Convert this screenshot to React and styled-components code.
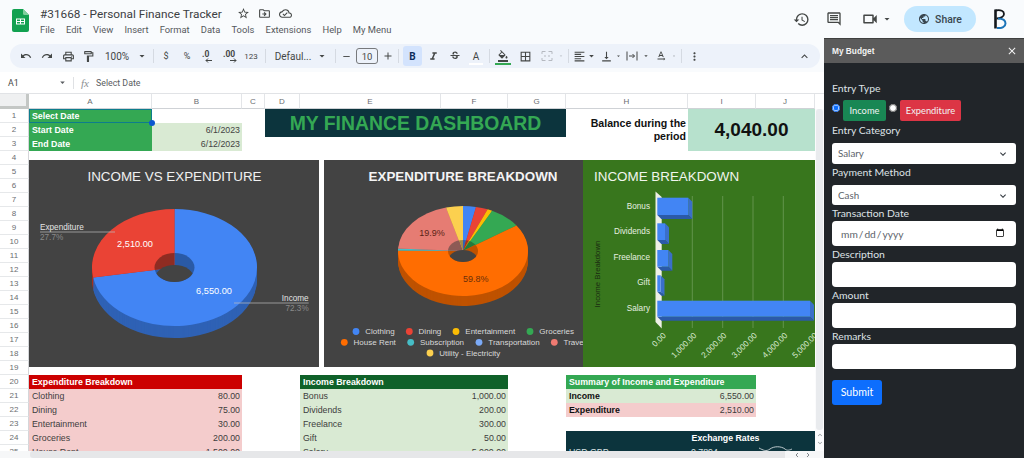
import React from "react";
import styled, { createGlobalStyle } from "styled-components";
import {
  MdStarBorder, MdOutlineDriveFileMove, MdOutlineCloudDone, MdHistory, MdOutlineInsertComment,
  MdOutlineVideocam, MdArrowDropDown, MdPublic, MdUndo, MdRedo, MdOutlineLocalPrintshop,
  MdOutlineFormatPaint, MdFormatItalic, MdStrikethroughS, MdOutlineFormatColorFill, MdBorderAll,
  MdFormatAlignLeft, MdVerticalAlignBottom, MdTextRotationNone, MdMoreVert, MdKeyboardArrowUp,
  MdClose, MdKeyboardArrowDown, MdAdd, MdRemove,
} from "react-icons/md";

const GlobalStyle = createGlobalStyle`
  *, *::before, *::after {
    box-sizing: border-box;
    padding: 0;
    margin: 0;
  }
  body {
    font-family: "Liberation Sans", Arial, sans-serif;
    background: #f9fbfd;
  }
`;

const UI_FONT = `Roboto, "Liberation Sans", sans-serif`;
const FORM_FONT = `Lato, "Open Sans", sans-serif`;

const Page = styled.div`
  width: 1024px;
  height: 458px;
  overflow: hidden;
  background: #f9fbfd;
`;

/* top bar */
const TopBar = styled.header`
  height: 38px;
  display: flex;
  align-items: flex-start;
  padding: 9px 0 0 12px;
`;

const DocInfo = styled.div`
  margin-left: 11px;
  margin-top: -3px;
`;

const TitleRow = styled.div`
  display: flex;
  align-items: center;
  height: 15px;
  color: #444746;
`;

const DocTitle = styled.h1`
  font: 400 11.8px ${UI_FONT};
  color: #3c4043;
  width: 193px;
  white-space: nowrap;
`;

const TitleIcon = styled.span`
  display: flex;
  width: 21px;
  justify-content: center;
`;

const MenuRow = styled.nav`
  display: flex;
  gap: 11.2px;
  margin-top: 3px;
  font: 400 9.4px ${UI_FONT};
  color: #55585c;
`;

const TopActions = styled.div`
  margin-left: auto;
  margin-top: -3px;
  display: flex;
  align-items: center;
  color: #444746;
`;

const ActionSlot = styled.span`
  display: flex;
  justify-content: center;
  align-items: center;
  width: ${(p) => p.$w}px;
  margin-left: ${(p) => p.$ml || 0}px;
`;

const SharePill = styled.div`
  width: 72px;
  height: 26px;
  border-radius: 13px;
  background: #c2e7ff;
  display: flex;
  align-items: center;
  justify-content: center;
  gap: 5px;
  margin-left: 10px;
  font: 500 10.4px ${UI_FONT};
  color: #39464f;
`;

const BrandMark = styled.svg`
  margin-left: 17px;
  margin-right: 17px;
`;

/* main */
const Body = styled.div`
  display: flex;
  height: 420px;
`;

const Main = styled.main`
  width: 824px;
  display: flex;
  flex-direction: column;
`;

const Toolbar = styled.div`
  height: 24px;
  margin: 6px 4px 4px 10px;
  padding: 0 8px 0 6px;
  border-radius: 12px;
  background: #edf2fa;
  display: flex;
  align-items: center;
  color: #444746;
  font: 400 10px ${UI_FONT};
`;

const ToolSlot = styled.span`
  flex: none;
  width: ${(p) => p.$w}px;
  height: 20px;
  display: flex;
  align-items: center;
  justify-content: center;
  white-space: nowrap;
  position: relative;
  color: ${(p) => p.$color || "inherit"};
  font-size: ${(p) => p.$size || 10}px;
  background: ${(p) => (p.$active ? "#d3e3fd" : "transparent")};
  border-radius: ${(p) => (p.$active ? 3 : 0)}px;
  font-weight: ${(p) => (p.$active ? 700 : 400)};
`;

const ToolSep = styled.span`
  flex: none;
  width: ${(p) => p.$w}px;
  display: flex;
  justify-content: center;
  &::after {
    content: "";
    width: 1px;
    height: 14px;
    background: #d5dae2;
  }
`;

const SizeBox = styled.span`
  width: 22px;
  height: 16px;
  border: 1px solid #77797c;
  border-radius: 3px;
  display: flex;
  align-items: center;
  justify-content: center;
  font-size: 9.5px;
`;

const ToolEnd = styled.span`
  margin-left: auto;
  display: flex;
`;

const FillBar = styled.span`
  position: absolute;
  left: 3px;
  right: 3px;
  bottom: 1px;
  height: 2px;
  background: ${(p) => p.$color};
`;

const FormulaBar = styled.div`
  height: 21px;
  padding-left: 8px;
  display: flex;
  align-items: center;
  background: #fff;
  font: 400 8.8px ${UI_FONT};
  color: #5a5d61;
`;

const CellName = styled.span`
  width: 49px;
  color: #444746;
`;

const FormulaSep = styled.span`
  width: 1px;
  height: 12px;
  background: #dfe1e4;
  margin: 0 7px 0 5px;
`;

const FxLabel = styled.i`
  width: 15px;
  font: italic 400 11px "Liberation Serif", serif;
  color: #8c8f93;
`;

/* sheet */
const Sheet = styled.section`
  position: relative;
  height: 365px;
  overflow: hidden;
  background: #fff;
  border-top: 1px solid #e1e3e6;
`;

const ColumnHeads = styled.div`
  display: grid;
  grid-template-columns: 29px 123px 90px 23px 35px 141px 67px 58px 122px 68px 59px;
  height: 15px;
`;

const CornerCell = styled.div`
  background: #eff0f1;
  border-right: 3px solid #c4c7c5;
  border-bottom: 3px solid #c4c7c5;
`;

const ColumnHead = styled.div`
  border-right: 1px solid #e3e5e8;
  border-bottom: 1px solid #cfd2d6;
  font-size: 8px;
  color: #6a6d70;
  display: flex;
  align-items: center;
  justify-content: center;
`;

const SheetBody = styled.div`
  display: flex;
`;

const RowHeads = styled.div`
  width: 29px;
  flex: none;
  background: #fff;
`;

const RowHead = styled.div`
  height: 14px;
  border-bottom: 1px solid #e6e8ea;
  border-right: 1px solid #d4d6d9;
  font-size: 8px;
  color: #6a6d70;
  display: flex;
  align-items: center;
  justify-content: center;
`;

const Cells = styled.div`
  width: 786px;
  flex: none;
`;

const HeadBlock = styled.div`
  display: grid;
  grid-template-columns: 123px 90px 23px 301px 122px 127px;
  grid-template-rows: repeat(3, 14px);
  font-size: 8.8px;
`;

const GreenLabel = styled.div`
  grid-column: 1;
  grid-row: ${(p) => p.$row};
  background: #34a853;
  color: #fff;
  font-weight: 700;
  padding-left: 3px;
  line-height: 14px;
  position: relative;
  box-shadow: ${(p) => (p.$selected ? "inset 0 0 0 1px #0d7d8c" : "none")};
`;

const FillHandle = styled.span`
  position: absolute;
  right: -3px;
  bottom: -3px;
  width: 6px;
  height: 6px;
  border-radius: 50%;
  background: #0b57d0;
  z-index: 2;
`;

const DateCell = styled.div`
  grid-column: 2;
  grid-row: ${(p) => p.$row};
  background: #d9ead3;
  color: #444;
  text-align: right;
  padding-right: 2px;
  line-height: 14px;
`;

const Banner = styled.div`
  grid-column: 4;
  grid-row: 1 / span 2;
  background: #0c343d;
  color: #34a853;
  font-weight: 700;
  font-size: 19.4px;
  display: flex;
  align-items: center;
  justify-content: center;
`;

const BalanceLabel = styled.div`
  grid-column: 5;
  grid-row: 1 / span 3;
  font-size: 10.6px;
  font-weight: 700;
  line-height: 13px;
  color: #111;
  text-align: right;
  padding: 8px 2px 0 0;
`;

const BalanceValue = styled.div`
  grid-column: 6;
  grid-row: 1 / span 3;
  background: #b7e1cd;
  color: #111;
  font-size: 19px;
  font-weight: 700;
  display: flex;
  align-items: center;
  justify-content: center;
`;

const ChartRow = styled.div`
  display: flex;
  margin-top: 9px;
`;

const ChartPanel = styled.svg`
  display: block;
  flex: none;
  margin-right: ${(p) => p.$gap || 0}px;
  background: ${(p) => p.$bg};
  font-family: "Liberation Sans", Arial, sans-serif;
`;

const TableRow = styled.div`
  display: grid;
  grid-template-columns: 213px 208px 249px;
  column-gap: 58px;
  margin-top: 8px;
  font-size: 8.8px;
  color: #3d3d3d;
`;

const TableHead = styled.div`
  height: 14px;
  line-height: 14px;
  padding-left: 3px;
  color: #fff;
  font-weight: 700;
  background: ${(p) => p.$bg};
`;

const TableLine = styled.div`
  height: 14px;
  line-height: 14px;
  padding: 0 2px 0 3px;
  display: flex;
  justify-content: space-between;
  background: ${(p) => p.$bg};
`;

const LineLabel = styled.span`
  font-weight: ${(p) => (p.$bold ? 700 : 400)};
  color: ${(p) => (p.$bold ? "#111" : "inherit")};
`;

const SummaryBox = styled.div`
  width: 190px;
`;

const Exchange = styled.div`
  margin-top: 14px;
  background: #0c343d;
  color: #fff;
`;

const ExchangeHead = styled.div`
  height: 14px;
  line-height: 14px;
  padding-left: 70px;
  text-align: center;
  font-weight: 700;
`;

const ExchangeLine = styled.div`
  height: 14px;
  display: grid;
  grid-template-columns: 122px 68px 59px;
  padding-left: 3px;
  line-height: 14px;
  color: #d9e2e4;
`;

const ScrollTrackX = styled.div`
  position: absolute;
  left: 0;
  right: 0;
  bottom: 0;
  height: 7px;
  background: #f6f7f8;
  display: flex;
  z-index: 3;
`;

const ScrollThumbX = styled.div`
  margin-left: 30px;
  width: 755px;
  background: #e6e7e9;
  border-radius: 3px 0 0 3px;
`;

const ScrollArrows = styled.div`
  margin-left: 9px;
  display: flex;
  gap: 5px;
  align-items: center;
  color: #80868b;
`;

const ScrollTrackY = styled.div`
  position: absolute;
  right: 0;
  top: 15px;
  bottom: 7px;
  width: 9px;
  background: #fbfbfc;
  display: flex;
  flex-direction: column;
  align-items: center;
  color: #80868b;
  z-index: 3;
`;

const ScrollThumbY = styled.div`
  width: 7px;
  height: 321px;
  background: #e9ebee;
  border-radius: 3px;
  margin-bottom: 1px;
`;

/* budget sidebar */
const Sidebar = styled.aside`
  width: 200px;
  background: #212529;
  display: flex;
  flex-direction: column;
  font: 400 10.4px ${FORM_FONT};
  color: #dee2e6;
`;

const SideHead = styled.div`
  height: 25px;
  background: #5b5b5b;
  border-top: 1px solid #3f3f3f;
  padding: 0 6px 0 8px;
  display: flex;
  align-items: center;
  justify-content: space-between;
  font: 700 8.3px "Liberation Sans", Arial, sans-serif;
  color: #f4f4f4;
`;

const BudgetForm = styled.form`
  padding: 17px 8px 0;
  display: flex;
  flex-direction: column;
`;

const Field = styled.label`
  display: block;
  height: 16px;
  line-height: 16px;
  white-space: nowrap;
  margin-bottom: ${(p) => p.$gap || 0}px;
`;

const TypeRow = styled.div`
  display: flex;
  align-items: flex-start;
  height: 21px;
  margin-bottom: 1px;
`;

const Radio = styled.input`
  width: 8px;
  height: 8px;
  margin: 4px 3px 0 0;
  accent-color: #0d6efd;
`;

const TypeBadge = styled.span`
  height: 21px;
  width: ${(p) => p.$w}px;
  margin-right: 3px;
  background: ${(p) => p.$bg};
  border-radius: 2px;
  display: flex;
  align-items: center;
  justify-content: center;
  font-size: 9.3px;
  color: #f1f3f3;
`;

const SelectWrap = styled.div`
  position: relative;
  height: 20.5px;
  color: #343a40;
`;

const Select = styled.select`
  appearance: none;
  width: 100%;
  height: 100%;
  display: block;
  border: 0;
  border-radius: 3px;
  background: #fff;
  padding-left: 6px;
  font: 400 9.8px ${FORM_FONT};
  color: #5d646b;
`;

const Chevron = styled.span`
  position: absolute;
  right: 7px;
  top: 5px;
  display: flex;
  pointer-events: none;
`;

const TextField = styled.input`
  width: 100%;
  height: 25px;
  flex: none;
  display: block;
  border: 0;
  border-radius: 4px;
  background: #fff;
  padding: 0 9px 0 8px;
  font: 400 10.2px ${FORM_FONT};
  color: #5d646b;
`;

const SubmitButton = styled.button`
  width: 50px;
  height: 25.5px;
  margin-top: 10.5px;
  border: 0;
  border-radius: 3px;
  background: #0d6efd;
  color: #fff;
  font: 400 10.6px ${FORM_FONT};
`;

/* chart helpers, all charts draw in page coordinates through their viewBox */
const slicePath = (cx, cy, rx, ry, from, to) => {
  const a0 = from * 2 * Math.PI;
  const a1 = to * 2 * Math.PI;
  const x0 = cx + rx * Math.sin(a0);
  const y0 = cy - ry * Math.cos(a0);
  const x1 = cx + rx * Math.sin(a1);
  const y1 = cy - ry * Math.cos(a1);
  const large = to - from > 0.5 ? 1 : 0;
  return `M${cx} ${cy}L${x0} ${y0}A${rx} ${ry} 0 ${large} 1 ${x1} ${y1}Z`;
};

function Pie3D({ id, cx, cy, rx, ry, hx, hy, depth, slices, bg }) {
  const layers = [];
  for (let d = depth; d > 0; d--) layers.push(d);
  return (
    <g>
      {layers.map((d) =>
        slices.map((s) => (
          <path key={`${d}-${s.color}`} d={slicePath(cx, cy + d, rx, ry, s.from, s.to)} fill={s.side} />
        ))
      )}
      {slices.map((s) => (
        <path key={s.color} d={slicePath(cx, cy, rx, ry, s.from, s.to)} fill={s.color} />
      ))}
      <clipPath id={id}>
        <ellipse cx={cx} cy={cy} rx={hx} ry={hy} />
      </clipPath>
      <g clipPath={`url(#${id})`}>
        {slices.map((s) => (
          <path key={s.color} d={slicePath(cx, cy, hx + 1, hy + 1, s.from, s.to)} fill={s.wall} />
        ))}
        <ellipse cx={cx} cy={cy + depth} rx={hx} ry={hy} fill={bg} />
      </g>
    </g>
  );
}

function IncomeVsExpenditure() {
  const slices = [
    { from: 0, to: 0.723, color: "#4285f4", side: "#2f62b5", wall: "#2a5aa6" },
    { from: 0.723, to: 1, color: "#ea4335", side: "#a6301f", wall: "#8f2c22" },
  ];
  return (
    <ChartPanel $bg="#434343" $gap={5} width="290" height="207" viewBox="29 160 290 207">
      <text x="174.5" y="181" textAnchor="middle" fontSize="13.4" fill="#f1f1f1">INCOME VS EXPENDITURE</text>
      <Pie3D id="pie-a" cx={174.5} cy={267.5} rx={82.5} ry={58.5} hx={20} hy={14.5} depth={12} slices={slices} bg="#434343" />
      <text x="135" y="246.5" textAnchor="middle" fontSize="9.2" fill="#fff">2,510.00</text>
      <text x="214" y="294" textAnchor="middle" fontSize="9.2" fill="#fff">6,550.00</text>
      <text x="40" y="230" fontSize="8.2" fill="#e4e4e4">Expenditure</text>
      <path d="M40 232H115" stroke="#bdbdbd" strokeWidth="0.7" />
      <text x="40" y="240" fontSize="8.2" fill="#8a8a8a">27.7%</text>
      <text x="308.7" y="301" textAnchor="end" fontSize="8.2" fill="#e4e4e4">Income</text>
      <path d="M234 303H308.7" stroke="#bdbdbd" strokeWidth="0.7" />
      <text x="308.7" y="311" textAnchor="end" fontSize="8.2" fill="#8a8a8a">72.3%</text>
    </ChartPanel>
  );
}

const EXPENSE_SLICES = [
  { from: 0, to: 0.032, color: "#4285f4", side: "#2f62b5", wall: "#2f62b5" },
  { from: 0.032, to: 0.062, color: "#ea4335", side: "#a6301f", wall: "#a6301f" },
  { from: 0.062, to: 0.074, color: "#fbbc04", side: "#b48704", wall: "#b48704" },
  { from: 0.074, to: 0.154, color: "#34a853", side: "#25793c", wall: "#25793c" },
  { from: 0.154, to: 0.752, color: "#ff6d01", side: "#bf5200", wall: "#bf5200" },
  { from: 0.752, to: 0.759, color: "#46bdc6", side: "#32878e", wall: "#32878e" },
  { from: 0.759, to: 0.958, color: "#e67c73", side: "#a55952", wall: "#8d5a55" },
  { from: 0.958, to: 1, color: "#fcd04f", side: "#b59539", wall: "#a08a4a" },
];

const LEGEND = [
  { dot: 356, y: 331.5, color: "#4285f4", label: "Clothing" },
  { dot: 409.3, y: 331.5, color: "#ea4335", label: "Dining" },
  { dot: 456, y: 331.5, color: "#fbbc04", label: "Entertainment" },
  { dot: 530, y: 331.5, color: "#34a853", label: "Groceries" },
  { dot: 344.3, y: 342.3, color: "#ff6d01", label: "House Rent" },
  { dot: 410.7, y: 342.3, color: "#46bdc6", label: "Subscription" },
  { dot: 479, y: 342.3, color: "#7baaf7", label: "Transportation" },
  { dot: 554.3, y: 342.3, color: "#f07b72", label: "Travel" },
  { dot: 430, y: 353, color: "#fcd04f", label: "Utility - Electricity" },
];

function ExpenditureBreakdown() {
  return (
    <ChartPanel $bg="#434343" width="259" height="207" viewBox="324 160 259 207">
      <text x="463" y="181" textAnchor="middle" fontSize="13.4" fontWeight="700" fill="#f4f4f4">EXPENDITURE BREAKDOWN</text>
      <Pie3D id="pie-b" cx={463} cy={251} rx={65} ry={45} hx={15} hy={11} depth={10} slices={EXPENSE_SLICES} bg="#434343" />
      <text x="432" y="235.5" textAnchor="middle" fontSize="9" fill="#5b2416">19.9%</text>
      <text x="475.7" y="282" textAnchor="middle" fontSize="9" fill="#6b2f0a">59.8%</text>
      {LEGEND.map((item) => (
        <g key={item.label}>
          <circle cx={item.dot} cy={item.y} r="3.4" fill={item.color} />
          <text x={item.dot + 9.3} y={item.y + 2.8} fontSize="8" fill="#d9d9d9">{item.label}</text>
        </g>
      ))}
    </ChartPanel>
  );
}

const INCOME_BARS = [
  { label: "Bonus", right: 688.3, top: 197.7, bottom: 215, labelY: 208.5 },
  { label: "Dividends", right: 665, top: 223.3, bottom: 240, labelY: 234 },
  { label: "Freelance", right: 668.3, top: 250, bottom: 266.7, labelY: 260 },
  { label: "Gift", right: 660.5, top: 275.3, bottom: 291.7, labelY: 285 },
  { label: "Salary", right: 810, top: 300.7, bottom: 316.7, labelY: 311 },
];
const GRID_X = [692.3, 722.7, 753, 783.3];
const TICKS = [
  { x: 666.5, label: "0.00" }, { x: 697, label: "1,000.00" }, { x: 727, label: "2,000.00" },
  { x: 757.5, label: "3,000.00" }, { x: 788, label: "4,000.00" }, { x: 818, label: "5,000.00" },
];

function IncomeBreakdown() {
  const x0 = 657.3;
  const d = 4;
  return (
    <ChartPanel $bg="#38761d" width="232" height="207" viewBox="583 160 232 207">
      <text x="594" y="181" fontSize="13.4" fill="#f1f5ee">INCOME BREAKDOWN</text>
      <text transform="translate(600 274) rotate(-90)" textAnchor="middle" fontSize="7.8" fill="#1b2c12">Income Breakdown</text>
      <path d="M655.5 191.5L661.7 197V328.5L655.5 322Z" fill="#eef0e6" />
      {GRID_X.map((x) => (
        <path key={x} d={`M${x} 196V328`} stroke="#7fa86b" strokeWidth="0.6" />
      ))}
      {INCOME_BARS.map((b) => (
        <g key={b.label}>
          <path d={`M${b.right} ${b.top}L${b.right + d} ${b.top + d}V${b.bottom + d}L${b.right} ${b.bottom}Z`} fill="#3a6fc9" />
          <path d={`M${x0} ${b.bottom}H${b.right}L${b.right + d} ${b.bottom + d}H${x0 + d}Z`} fill="#2b5aa8" />
          <rect x={x0} y={b.top} width={b.right - x0} height={b.bottom - b.top} fill="#4285f4" />
          <text x="650" y={b.labelY} textAnchor="end" fontSize="8.2" fill="#e6efe0">{b.label}</text>
        </g>
      ))}
      {TICKS.map((t) => (
        <text key={t.label} transform={`translate(${t.x} 336) rotate(-45)`} textAnchor="end" fontSize="8.2" fill="#d9ead3">{t.label}</text>
      ))}
    </ChartPanel>
  );
}

/* small toolbar drawings */
const SheetsLogo = () => (
  <svg width="17" height="23" viewBox="0 0 17 23">
    <path d="M2 0H11L17 6V21a2 2 0 0 1-2 2H2a2 2 0 0 1-2-2V2a2 2 0 0 1 2-2Z" fill="#12a150" />
    <path d="M11 0L17 6H12.5A1.5 1.5 0 0 1 11 4.5Z" fill="#7fcf9d" />
    <path d="M4 9.5H13V15.5H4ZM5 10.5V12H8V10.5ZM9 10.5V12H12V10.5ZM5 13V14.5H8V13ZM9 13V14.5H12V13Z" fill="#fff" fillRule="evenodd" />
  </svg>
);

const DecimalGlyph = ({ label, width, flip }) => (
  <svg width={width} height="16" viewBox={`0 0 ${width} 16`}>
    <text x="0" y="9" fontSize="8.5" fontWeight="700" fill="#444746" fontFamily="Roboto, sans-serif">{label}</text>
    <path d={flip ? `M${width - 8} 12.5H${width - 2}M${width - 4} 10.5L${width - 2} 12.5L${width - 4} 14.5` : `M${width - 2} 12.5H${width - 8}M${width - 6} 10.5L${width - 8} 12.5L${width - 6} 14.5`} stroke="#444746" fill="none" strokeWidth="1" />
  </svg>
);

const MergeGlyph = () => (
  <svg width="12" height="12" viewBox="0 0 12 12" fill="none" stroke="#b5b9c0" strokeWidth="1">
    <path d="M1 4V1.5H4.5M7.5 1.5H11V4M1 8V10.5H4.5M7.5 10.5H11V8" />
    <path d="M3 6H5M7 6H9" />
  </svg>
);

const WrapGlyph = () => (
  <svg width="12" height="12" viewBox="0 0 12 12" fill="none" stroke="#444746" strokeWidth="1">
    <path d="M1 1.5V10.5M11 1.5V10.5M3 6H8.5M6.5 4L8.5 6L6.5 8" />
  </svg>
);

const Caret = ({ w }) => (
  <ToolSlot $w={w}>
    <MdArrowDropDown size={12} />
  </ToolSlot>
);

function MainToolbar() {
  return (
    <Toolbar>
      <ToolSlot $w={20}><MdUndo size={12} /></ToolSlot>
      <ToolSlot $w={22}><MdRedo size={12} /></ToolSlot>
      <ToolSlot $w={20}><MdOutlineLocalPrintshop size={13} /></ToolSlot>
      <ToolSlot $w={20}><MdOutlineFormatPaint size={13} /></ToolSlot>
      <ToolSlot $w={38}>100%</ToolSlot>
      <Caret w={12} />
      <ToolSep $w={10} />
      <ToolSlot $w={16} $size={9}>$</ToolSlot>
      <ToolSlot $w={26} $size={9}>%</ToolSlot>
      <ToolSlot $w={16}><DecimalGlyph label=".0" width={12} /></ToolSlot>
      <ToolSlot $w={28}><DecimalGlyph label=".00" width={15} flip /></ToolSlot>
      <ToolSlot $w={14} $size={8}>123</ToolSlot>
      <ToolSep $w={14} />
      <ToolSlot $w={42}>Defaul...</ToolSlot>
      <Caret w={16} />
      <ToolSep $w={10} />
      <ToolSlot $w={12}><MdRemove size={11} /></ToolSlot>
      <ToolSlot $w={30}><SizeBox>10</SizeBox></ToolSlot>
      <ToolSlot $w={12}><MdAdd size={12} /></ToolSlot>
      <ToolSep $w={9} />
      <ToolSlot $w={19} $active $color="#0b2c5a">B</ToolSlot>
      <ToolSlot $w={22}><MdFormatItalic size={13} /></ToolSlot>
      <ToolSlot $w={22}><MdStrikethroughS size={12} /></ToolSlot>
      <ToolSlot $w={20}>A<FillBar $color="#fff" /></ToolSlot>
      <ToolSep $w={6} />
      <ToolSlot $w={22}><MdOutlineFormatColorFill size={12} /><FillBar $color="#34a853" /></ToolSlot>
      <ToolSlot $w={22}><MdBorderAll size={13} /></ToolSlot>
      <ToolSlot $w={22}><MergeGlyph /></ToolSlot>
      <ToolSlot $w={6} $color="#b5b9c0"><MdArrowDropDown size={10} /></ToolSlot>
      <ToolSep $w={8} />
      <ToolSlot $w={14}><MdFormatAlignLeft size={13} /></ToolSlot>
      <Caret w={11} />
      <ToolSlot $w={18}><MdVerticalAlignBottom size={13} /></ToolSlot>
      <Caret w={7} />
      <ToolSlot $w={20}><WrapGlyph /></ToolSlot>
      <Caret w={8} />
      <ToolSlot $w={22}><MdTextRotationNone size={12} /></ToolSlot>
      <Caret w={4} />
      <ToolSep $w={11} />
      <ToolSlot $w={14}><MdMoreVert size={13} /></ToolSlot>
      <ToolEnd><ToolSlot $w={16}><MdKeyboardArrowUp size={13} /></ToolSlot></ToolEnd>
    </Toolbar>
  );
}

const COLUMNS = ["A", "B", "C", "D", "E", "F", "G", "H", "I", "J"];
const ROWS = Array.from({ length: 25 }, (_, i) => i + 1);
const MENUS = ["File", "Edit", "View", "Insert", "Format", "Data", "Tools", "Extensions", "Help", "My Menu"];
const EXPENSES = [
  ["Clothing", "80.00"], ["Dining", "75.00"], ["Entertainment", "30.00"],
  ["Groceries", "200.00"], ["House Rent", "1,500.00"],
];
const INCOMES = [
  ["Bonus", "1,000.00"], ["Dividends", "200.00"], ["Freelance", "300.00"],
  ["Gift", "50.00"], ["Salary", "5,000.00"],
];

function BudgetSidebar() {
  return (
    <Sidebar>
      <SideHead>
        My Budget
        <MdClose size={12} />
      </SideHead>
      <BudgetForm onSubmit={(e) => e.preventDefault()}>
        <Field $gap={4}>Entry Type</Field>
        <TypeRow>
          <Radio type="radio" name="entryType" defaultChecked />
          <TypeBadge $w={43} $bg="#198754">Income</TypeBadge>
          <Radio type="radio" name="entryType" />
          <TypeBadge $w={61} $bg="#dc3545">Expenditure</TypeBadge>
        </TypeRow>
        <Field $gap={5}>Entry Category</Field>
        <SelectWrap>
          <Select defaultValue="Salary"><option>Salary</option></Select>
          <Chevron><MdKeyboardArrowDown size={12} /></Chevron>
        </SelectWrap>
        <Field $gap={5}>Payment Method</Field>
        <SelectWrap>
          <Select defaultValue="Cash"><option>Cash</option></Select>
          <Chevron><MdKeyboardArrowDown size={12} /></Chevron>
        </SelectWrap>
        <Field>Transaction Date</Field>
        <TextField type="date" />
        <Field>Description</Field>
        <TextField type="text" />
        <Field>Amount</Field>
        <TextField type="text" />
        <Field>Remarks</Field>
        <TextField type="text" />
        <SubmitButton type="submit">Submit</SubmitButton>
      </BudgetForm>
    </Sidebar>
  );
}

export default function App() {
  return (
    <Page>
      <GlobalStyle />
      <TopBar>
        <SheetsLogo />
        <DocInfo>
          <TitleRow>
            <DocTitle>#31668 - Personal Finance Tracker</DocTitle>
            <TitleIcon><MdStarBorder size={13} /></TitleIcon>
            <TitleIcon><MdOutlineDriveFileMove size={13} /></TitleIcon>
            <TitleIcon><MdOutlineCloudDone size={13} /></TitleIcon>
          </TitleRow>
          <MenuRow>
            {MENUS.map((m) => <span key={m}>{m}</span>)}
          </MenuRow>
        </DocInfo>
        <TopActions>
          <ActionSlot $w={33}><MdHistory size={17} /></ActionSlot>
          <ActionSlot $w={33}><MdOutlineInsertComment size={16} /></ActionSlot>
          <ActionSlot $w={20} $ml={9.5}><MdOutlineVideocam size={18} /></ActionSlot>
          <ActionSlot $w={14}><MdArrowDropDown size={12} /></ActionSlot>
          <SharePill><MdPublic size={12} />Share</SharePill>
          <BrandMark width="14" height="20" viewBox="0 0 14 20" fill="none">
            <path d="M2.5 0.5V19.5" stroke="#14181c" strokeWidth="2.6" />
            <path d="M2.5 1.5C8 0.5 11 2 11 5C11 8 7 9.5 3.5 9.5" stroke="#14181c" strokeWidth="1.8" />
            <path d="M5 9.5C10 9.5 12.5 11.5 12.5 14.5C12.5 17.5 9 19.5 4 19" stroke="#1c74b8" strokeWidth="2" />
          </BrandMark>
        </TopActions>
      </TopBar>
      <Body>
        <Main>
          <MainToolbar />
          <FormulaBar>
            <CellName>A1</CellName>
            <MdArrowDropDown size={11} />
            <FormulaSep />
            <FxLabel>fx</FxLabel>
            Select Date
          </FormulaBar>
          <Sheet>
            <ColumnHeads>
              <CornerCell />
              {COLUMNS.map((c) => <ColumnHead key={c}>{c}</ColumnHead>)}
            </ColumnHeads>
            <SheetBody>
              <RowHeads>
                {ROWS.map((r) => <RowHead key={r}>{r}</RowHead>)}
              </RowHeads>
              <Cells>
                <HeadBlock>
                  <GreenLabel $row={1} $selected>Select Date<FillHandle /></GreenLabel>
                  <GreenLabel $row={2}>Start Date</GreenLabel>
                  <GreenLabel $row={3}>End Date</GreenLabel>
                  <DateCell $row={2}>6/1/2023</DateCell>
                  <DateCell $row={3}>6/12/2023</DateCell>
                  <Banner>MY FINANCE DASHBOARD</Banner>
                  <BalanceLabel>Balance during the<br />period</BalanceLabel>
                  <BalanceValue>4,040.00</BalanceValue>
                </HeadBlock>
                <ChartRow>
                  <IncomeVsExpenditure />
                  <ExpenditureBreakdown />
                  <IncomeBreakdown />
                </ChartRow>
                <TableRow>
                  <div>
                    <TableHead $bg="#cc0000">Expenditure Breakdown</TableHead>
                    {EXPENSES.map(([name, value]) => (
                      <TableLine key={name} $bg="#f4cccc"><span>{name}</span><span>{value}</span></TableLine>
                    ))}
                  </div>
                  <div>
                    <TableHead $bg="#0f6129">Income Breakdown</TableHead>
                    {INCOMES.map(([name, value]) => (
                      <TableLine key={name} $bg="#d9ead3"><span>{name}</span><span>{value}</span></TableLine>
                    ))}
                  </div>
                  <div>
                    <SummaryBox>
                      <TableHead $bg="#34a853">Summary of Income and Expenditure</TableHead>
                      <TableLine $bg="#d9ead3"><LineLabel $bold>Income</LineLabel><span>6,550.00</span></TableLine>
                      <TableLine $bg="#f4cccc"><LineLabel $bold>Expenditure</LineLabel><span>2,510.00</span></TableLine>
                    </SummaryBox>
                    <Exchange>
                      <ExchangeHead>Exchange Rates</ExchangeHead>
                      <ExchangeLine>
                        <span>USD GBP</span>
                        <span>0.7894</span>
                        <svg width="34" height="14" viewBox="0 0 34 14" fill="none">
                          <path d="M0 3C4 5 7 7 11 4C15 1 22 1 26 4C28 6 31 5 33 4" stroke="#e8eef0" strokeWidth="0.8" />
                        </svg>
                      </ExchangeLine>
                    </Exchange>
                  </div>
                </TableRow>
              </Cells>
            </SheetBody>
            <ScrollTrackY>
              <ScrollThumbY />
              <MdKeyboardArrowUp size={8} />
              <MdKeyboardArrowDown size={8} />
            </ScrollTrackY>
            <ScrollTrackX>
              <ScrollThumbX />
              <ScrollArrows>
                <svg width="6" height="6" viewBox="0 0 6 6"><path d="M4 1L2 3L4 5" fill="none" stroke="#80868b" /></svg>
                <svg width="6" height="6" viewBox="0 0 6 6"><path d="M2 1L4 3L2 5" fill="none" stroke="#80868b" /></svg>
              </ScrollArrows>
            </ScrollTrackX>
          </Sheet>
        </Main>
        <BudgetSidebar />
      </Body>
    </Page>
  );
}
